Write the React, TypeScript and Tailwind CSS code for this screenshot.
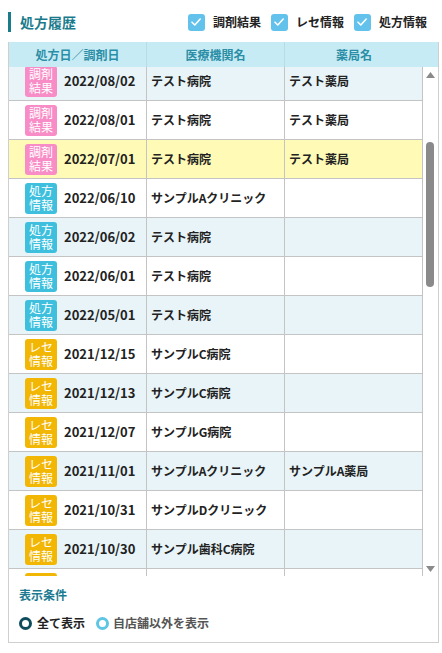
import React from "react";

type Kind = "chozai" | "shoho" | "rese";
const rows: { k: Kind; d: string; h: string; p: string; sel?: boolean }[] = [
  { k: "chozai", d: "2022/08/02", h: "テスト病院", p: "テスト薬局" },
  { k: "chozai", d: "2022/08/01", h: "テスト病院", p: "テスト薬局" },
  { k: "chozai", d: "2022/07/01", h: "テスト病院", p: "テスト薬局", sel: true },
  { k: "shoho", d: "2022/06/10", h: "サンプルAクリニック", p: "" },
  { k: "shoho", d: "2022/06/02", h: "テスト病院", p: "" },
  { k: "shoho", d: "2022/06/01", h: "テスト病院", p: "" },
  { k: "shoho", d: "2022/05/01", h: "テスト病院", p: "" },
  { k: "rese", d: "2021/12/15", h: "サンプルC病院", p: "" },
  { k: "rese", d: "2021/12/13", h: "サンプルC病院", p: "" },
  { k: "rese", d: "2021/12/07", h: "サンプルG病院", p: "" },
  { k: "rese", d: "2021/11/01", h: "サンプルAクリニック", p: "サンプルA薬局" },
  { k: "rese", d: "2021/10/31", h: "サンプルDクリニック", p: "" },
  { k: "rese", d: "2021/10/30", h: "サンプル歯科C病院", p: "" },
  { k: "rese", d: "2021/10/01", h: "サンプルE病院", p: "" },
];

function Badge({ k }: { k: Kind }) {
  const map = {
    chozai: { bg: "bg-[#f78cc6]", a: "調剤", b: "結果" },
    shoho: { bg: "bg-[#3ebfdd]", a: "処方", b: "情報" },
    rese: { bg: "bg-[#f2b705]", a: "レセ", b: "情報" },
  }[k];
  return (
    <div
      className={`${map.bg} w-[32px] h-[31px] rounded-[3px] flex flex-col items-center justify-center text-white text-[12px] leading-[14px] font-normal shrink-0`}
    >
      <span>{map.a}</span>
      <span>{map.b}</span>
    </div>
  );
}

function Check({ label }: { label: string }) {
  return (
    <div className="flex items-center">
      <div className="w-[17px] h-[17px] rounded-[3px] bg-[#62c2ec] flex items-center justify-center">
        <svg width="12" height="12" viewBox="0 0 12 12">
          <path d="M2 6.2 L4.8 9 L10.2 3" fill="none" stroke="white" strokeWidth="1.6" strokeLinecap="round" strokeLinejoin="round" />
        </svg>
      </div>
      <span className="ml-[8px] text-[12px] text-[#222] font-bold">{label}</span>
    </div>
  );
}

export default function App() {
  return (
    <div className="w-[442px] h-[653px] bg-white font-['Noto_Sans_CJK_JP',sans-serif] overflow-hidden">
      <div className="flex items-center h-[20px] mt-[12px] ml-[8px] mr-[15px]">
        <div className="w-[3px] h-[20px] bg-[#1a7b8c]" />
        <span className="ml-[9px] text-[14px] font-bold text-[#1a7b8c] leading-[20px]">処方履歴</span>
        <div className="ml-auto flex items-center gap-[10px]">
          <Check label="調剤結果" />
          <Check label="レセ情報" />
          <Check label="処方情報" />
        </div>
      </div>
      <div className="ml-[8px] mt-[10px] w-[431px] border border-t-0 border-[#cfcfcf]">
        <div className="flex h-[25px] bg-[#c7ebf5] text-[12px] font-bold text-[#2a8ea6]">
          <div className="w-[138px] border-r border-[#b9dbe4] flex items-center justify-center">処方日／調剤日</div>
          <div className="w-[138px] border-r border-[#b9dbe4] flex items-center justify-center">医療機関名</div>
          <div className="w-[138px] flex items-center justify-center">薬局名</div>
          <div className="w-[15px]" />
        </div>
        <div className="flex h-[509px]">
          <div className="w-[414px] overflow-hidden">
            <div className="-mt-[5px]">
              {rows.map((r, i) => (
                <div
                  key={i}
                  className={`flex h-[39px] border-b border-[#c4c4c4] ${
                    r.sel ? "bg-[#fffbb6]" : i % 2 === 0 ? "bg-[#e8f4f8]" : "bg-white"
                  }`}
                >
                  <div className="w-[138px] border-r border-[#c4c4c4] flex items-center pl-[16px]">
                    <Badge k={r.k} />
                    <span className="ml-[7px] text-[13px] font-bold text-[#222]">{r.d}</span>
                  </div>
                  <div className="w-[138px] border-r border-[#c4c4c4] flex items-center pl-[4px] text-[12px] font-bold text-[#222] whitespace-nowrap">
                    {r.h}
                  </div>
                  <div className="w-[138px] border-r border-[#c4c4c4] flex items-center pl-[4px] text-[12px] font-bold text-[#222] whitespace-nowrap">
                    {r.p}
                  </div>
                </div>
              ))}
            </div>
          </div>
          <div className="w-[15px] relative bg-white flex flex-col items-center">
            <svg className="mt-[5px]" width="9" height="6" viewBox="0 0 9 6">
              <path d="M0 6 L4.5 0 L9 6 Z" fill="#8a8a8a" />
            </svg>
            <div className="absolute left-[3px] top-[75px] w-[8px] h-[145px] rounded-full bg-[#8a8a8a]" />
            <svg className="mt-auto mb-[4px]" width="9" height="6" viewBox="0 0 9 6">
              <path d="M0 0 L9 0 L4.5 6 Z" fill="#8a8a8a" />
            </svg>
          </div>
        </div>
        <div className="h-[66px] pl-[10px] pt-[9px]">
          <div className="text-[12px] font-bold text-[#1b7a91] leading-[20px]">表示条件</div>
          <div className="flex items-center mt-[9px]">
            <div className="w-[13px] h-[13px] rounded-full border-[3px] border-[#0e4c5c] bg-white" />
            <span className="ml-[5px] text-[12px] font-bold text-[#222]">全て表示</span>
            <div className="ml-[11px] w-[13px] h-[13px] rounded-full border-[3px] border-[#5ec5e2] bg-white" />
            <span className="ml-[4px] text-[12px] font-bold text-[#555]">自店舗以外を表示</span>
          </div>
        </div>
      </div>
    </div>
  );
}
